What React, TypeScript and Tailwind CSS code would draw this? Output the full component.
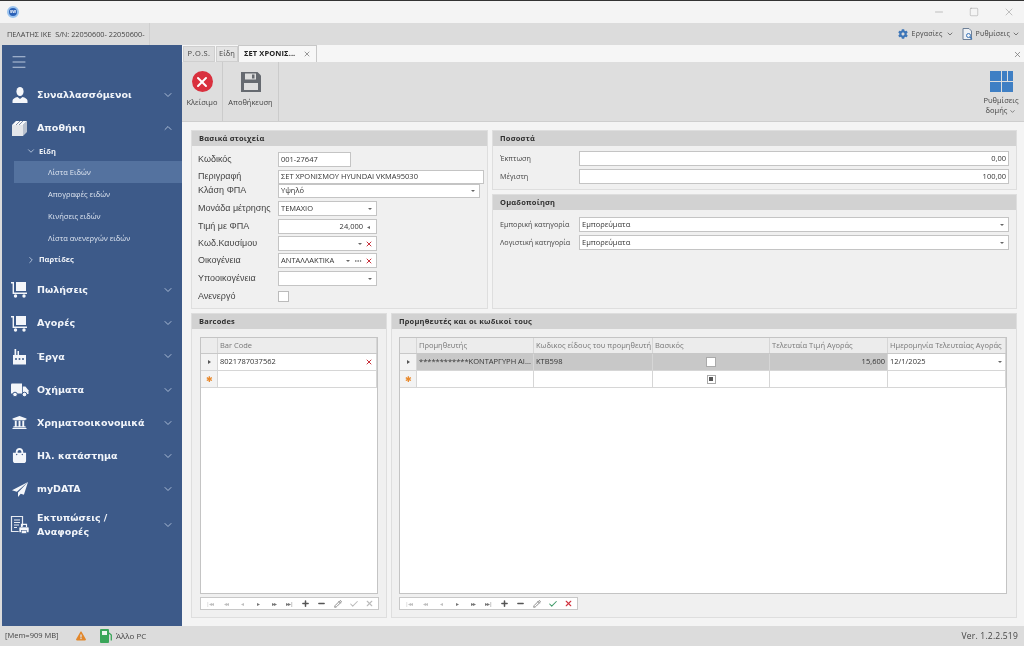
import React from "react";
import { ChevronDown, ChevronRight, ChevronUp, Check, X, Minus, Plus, Pencil, Square, Menu, Ellipsis } from "lucide-react";
import { FaUniversity, FaShoppingBag, FaCog, FaExclamationTriangle } from "react-icons/fa";

const UserIcon = () => (
  <svg width="18" height="18" viewBox="0 0 18 18" fill="#f4f6fa">
    <ellipse cx="9" cy="5.5" rx="3.6" ry="4.6" />
    <path d="M1.5 17v-2.2c0-2 2.4-3.1 5-3.8L9 13l2.5-2c2.6.7 5 1.800 5 3.800V17z" />
  </svg>
);
const BoxIcon = () => (
  <svg width="18" height="18" viewBox="0 0 18 18">
    <path d="M1 6h11v11H1z" fill="#e4e6ea" />
    <path d="M12 6l4-4v11l-4 4z" fill="#b9c1ce" />
    <path d="M1 6l4-4h11l-4 4z" fill="#f6f7f9" />
    <path d="M5 6l4-4M8 6l4-4" stroke="#7f8ea8" strokeWidth="1" />
  </svg>
);
const CartIcon = () => (
  <svg width="17" height="17" viewBox="0 0 17 17" fill="#f4f6fa">
    <path d="M0 1h3v10.500h13v1.500H1.600V2.500H0z" />
    <rect x="5" y="1" width="10" height="9" />
    <circle cx="4.500" cy="15" r="1.700" />
    <circle cx="13" cy="15" r="1.700" />
  </svg>
);
const FactoryIcon = () => (
  <svg width="15" height="17" viewBox="0 0 15 17" fill="#f4f6fa">
    <path d="M1 7h1.500V1h1.700v6h1.300V3h1.500v4L14 7v9.500H1z" />
    <g fill="#3d5a89">
      <circle cx="4" cy="11" r="1" /><circle cx="7.500" cy="11" r="1" /><circle cx="11" cy="11" r="1" />
    </g>
  </svg>
);
const TruckIcon = () => (
  <svg width="18" height="14" viewBox="0 0 18 14" fill="#f4f6fa">
    <path d="M0 1.500Q0 .5 1 .5h10v10H0z" />
    <path d="M11.800 3.500h2.600l3.100 3.800v3.700h-5.700z" />
    <circle cx="4" cy="11.500" r="2.300" stroke="#3d5a89" />
    <circle cx="13.500" cy="11.500" r="2.300" stroke="#3d5a89" />
  </svg>
);
const PlaneIcon = () => (
  <svg width="16" height="15" viewBox="0 0 16 15" fill="#f4f6fa">
    <path d="M16 0L0 8.200l4.800 1.600zM16 0L6 10.500V15l2.700-3.300 3.200 1z" />
  </svg>
);
const PrintDocIcon = () => (
  <svg width="20" height="20" viewBox="0 0 20 20" fill="none">
    <path d="M1.500 1.500h11v15h-11z" stroke="#e6eaf1" strokeWidth="1.200" />
    <path d="M4 5h6M4 7.500h6M4 10h5M4 12.500h3" stroke="#e6eaf1" strokeWidth="1" />
    <rect x="9" y="12" width="10" height="5.500" rx="1" fill="#f4f6fa" stroke="#3d5a89" strokeWidth=".6" />
    <path d="M11.500 12V9.300h5V12" stroke="#f4f6fa" strokeWidth="1.200" />
    <rect x="11.500" y="15.500" width="5" height="3" fill="#f4f6fa" stroke="#3d5a89" strokeWidth=".6" />
  </svg>
);
const SaveIcon = () => (
  <svg width="20" height="20" viewBox="0 0 20 20">
    <path d="M0 0h16.500L20 3.500V20H0z" fill="#666a70" />
    <rect x="4" y="1.500" width="11" height="6" fill="#dedede" />
    <rect x="11" y="2.500" width="2.500" height="4" fill="#666a70" />
    <rect x="3" y="11" width="14" height="7" fill="#dedede" />
  </svg>
);
const PumpIcon = () => (
  <svg width="12" height="14" viewBox="0 0 12 14">
    <rect x="0" y="0" width="9" height="14" rx="1" fill="#3aa65a" />
    <rect x="2" y="2" width="5" height="4" fill="#ecf6ee" />
    <path d="M9 4l2.300 2v5.500" stroke="#3aa65a" strokeWidth="1.300" fill="none" />
  </svg>
);
const DocIcon = () => (
  <svg width="11" height="12" viewBox="0 0 11 12" fill="none">
    <path d="M1 .5h6l2.500 2.500v8.500H1z" stroke="#6d7f96" strokeWidth="1" fill="#eef1f5" />
    <circle cx="6.500" cy="7.500" r="2" stroke="#3d76b8" strokeWidth="1" />
    <path d="M8 9l2 2.300" stroke="#3d76b8" strokeWidth="1.200" />
  </svg>
);

function MainItem({ icon, label, open, big }: { icon: React.ReactNode; label: React.ReactNode; open?: boolean; big?: boolean }) {
  return (
    <div className={`flex items-center pl-[6px] pr-[8px] text-[#f2f5fa] shrink-0 ${big ? "h-[38px]" : "h-[33.200px]"}`}>
      <div className="w-[23px] flex justify-center text-[#f4f6fa]">{icon}</div>
      <div className="ml-[6px] flex-1 text-[9.500px] leading-[13.500px] font-bold font-['DejaVu_Sans',sans-serif]">{label}</div>
      {open ? <ChevronUp size={12} className="text-[#aabbd5]" /> : <ChevronDown size={12} className="text-[#aabbd5]" />}
    </div>
  );
}

function SubItem({ label, active }: { label: string; active?: boolean }) {
  return (
    <div className={`ml-[12px] h-[22px] pl-[34px] flex items-center text-[7.500px] shrink-0 text-[#dfe6f1] ${active ? "bg-[#54729f]" : ""}`}>{label}</div>
  );
}

function Sidebar() {
  return (
    <aside className="w-[180px] ml-[2px] bg-[#3d5a89] flex flex-col shrink-0">
      <div className="h-[33px] flex items-center pl-[8px] text-[#c9d6e8] shrink-0"><Menu size={18} strokeWidth={1.200} /></div>
      <MainItem icon={<UserIcon />} label="Συναλλασσόμενοι" />
      <MainItem icon={<BoxIcon />} label="Αποθήκη" open />
      <div className="h-[17px] pb-[3px] flex items-center pl-[24px] text-[7.500px] font-bold text-[#f0f3f8] shrink-0">
        <ChevronDown size={10} className="mr-[3px] text-[#c2d0e4]" />Είδη
      </div>
      <SubItem label="Λίστα Ειδών" active />
      <SubItem label="Απογραφές ειδών" />
      <SubItem label="Κινήσεις ειδών" />
      <SubItem label="Λίστα ανενεργών ειδών" />
      <div className="h-[24px] pb-[3px] flex items-center pl-[24px] text-[7.500px] font-bold text-[#f0f3f8] shrink-0">
        <ChevronRight size={10} className="mr-[3px] text-[#c2d0e4]" />Παρτίδες
      </div>
      <MainItem icon={<CartIcon />} label="Πωλήσεις" />
      <MainItem icon={<CartIcon />} label="Αγορές" />
      <MainItem icon={<FactoryIcon />} label="Έργα" />
      <MainItem icon={<TruckIcon />} label="Οχήματα" />
      <MainItem icon={<FaUniversity size={15} />} label="Χρηματοοικονομικά" />
      <MainItem icon={<FaShoppingBag size={15} />} label="Ηλ. κατάστημα" />
      <MainItem icon={<PlaneIcon />} label="myDATA" />
      <MainItem big icon={<PrintDocIcon />} label={<>Εκτυπώσεις /<br />Αναφορές</>} />
    </aside>
  );
}

function Panel({ title, className, children }: { title: string; className?: string; children: React.ReactNode }) {
  return (
    <section className={`flex flex-col bg-[#f0f0f0] border border-[#dedede] ${className ?? ""}`}>
      <div className="h-[15px] bg-[#d2d2d2] flex items-center pl-[7px] text-[7.500px] font-bold text-[#2f2f2f] tracking-[0.2px] shrink-0">{title}</div>
      {children}
    </section>
  );
}

function Field({ value, width, right, arrow, del, dots, spin, h }: { value?: string; width: string; right?: boolean; arrow?: boolean; del?: boolean; dots?: boolean; spin?: boolean; h?: string }) {
  return (
    <div className={`${width} ${h ?? "h-[15px]"} bg-white border border-[#c4c4c4] flex items-center px-[2px] text-[7.500px] text-[#333] shrink-0 overflow-hidden`}>
      <span className={`flex-1 whitespace-nowrap ${right ? "text-right" : ""}`}>{value}</span>
      {spin && <span className="w-[6px] ml-[4px] mr-[1px] text-[#666] text-[6px] leading-none">◂</span>}
      {arrow && <span className="ml-[3px] mr-[2px] w-0 h-0 border-x-[2px] border-x-transparent border-t-[2px] border-t-[#666]" />}
      {dots && <Ellipsis size={8} className="mx-[2px] text-[#555]" />}
      {del && <X size={8} strokeWidth={3} className="ml-[1px] mr-[1px] text-[#c8323c]" />}
    </div>
  );
}

function FormRow({ label, mt, children, lw = "w-[80px]", fs = "text-[9px] font-['Liberation_Sans',sans-serif]" }: { label: string; mt: string; children: React.ReactNode; lw?: string; fs?: string }) {
  return (
    <div className={`flex items-center ${mt}`}>
      <div className={`${lw} ${fs} shrink-0 text-[#444] whitespace-nowrap`}>{label}</div>
      {children}
    </div>
  );
}

function NavButtons({ active }: { active?: boolean }) {
  const g = "w-[16px] flex justify-center text-[6px] leading-none tracking-[-1px]";
  return (
    <div className="h-[13px] w-fit bg-white border border-[#c8c8c8] flex items-center px-[0.500px] shrink-0">
      <span className={`${g} text-[#c0c0c0]`}>|◂◂</span>
      <span className={`${g} text-[#c0c0c0]`}>◂◂</span>
      <span className={`${g} text-[#c0c0c0]`}>◂</span>
      <span className={`${g} text-[#777]`}>▸</span>
      <span className={`${g} text-[#777]`}>▸▸</span>
      <span className={`${g} text-[#777]`}>▸▸|</span>
      <span className="w-[16px] flex justify-center text-[#555]"><Plus size={9} strokeWidth={4} /></span>
      <span className="w-[16px] flex justify-center text-[#555]"><Minus size={9} strokeWidth={4} /></span>
      <span className="w-[16px] flex justify-center text-[#777]"><Pencil size={8} strokeWidth={2.500} /></span>
      <span className={`w-[16px] flex justify-center ${active ? "text-[#3f9a68]" : "text-[#bbb]"}`}><Check size={10} strokeWidth={2.500} /></span>
      <span className={`w-[16px] flex justify-center ${active ? "text-[#d0343f]" : "text-[#bbb]"}`}><X size={9} strokeWidth={3} /></span>
    </div>
  );
}

function Cell({ w, children, right, cls }: { w: string; children?: React.ReactNode; right?: boolean; cls?: string }) {
  return (
    <div className={`${w} shrink-0 h-full border-r border-[#d6d6d6] flex items-center px-[2px] text-[7.500px] whitespace-nowrap overflow-hidden ${right ? "justify-end" : ""} ${cls ?? ""}`}>{children}</div>
  );
}

function Star() {
  return <span className="text-[#e98a2e] text-[8px] leading-none">✱</span>;
}

function Tri() {
  return <span className="w-0 h-0 border-y-[2.500px] border-y-transparent border-l-[3px] border-l-[#555]" />;
}

export default function App() {
  const c1 = "w-[17px]", c2 = "w-[117px]", c3 = "w-[119px]", c4 = "w-[117px]", c5 = "w-[118px]";
  const small = "text-[7.200px]";
  return (
    <div className="w-[1024px] h-[646px] overflow-hidden flex flex-col bg-[#dcdcdc] font-['Open_Sans','Noto_Sans',sans-serif] blur-[0.3px]">
      <div className="h-[1px] bg-[#333] shrink-0" />
      <header className="h-[22px] bg-[#f4f4f4] flex items-center shrink-0">
        <div className="ml-[7px] w-[12px] h-[12px] rounded-full bg-[#2b62b8] border-2 border-[#9cc4ee] flex items-center justify-center text-[4px] font-bold text-white">SW</div>
        <div className="ml-auto flex items-center text-[#888]">
          <Minus size={12} strokeWidth={1} className="mr-[24px]" />
          <Square size={10} strokeWidth={1} className="mr-[24px]" />
          <X size={12} strokeWidth={1} className="mr-[9px]" />
        </div>
      </header>
      <div className="h-[22px] bg-[#dcdcdc] flex items-center shrink-0 text-[#444]">
        <div className="pl-[7px] w-[150px] h-full flex items-center border-r border-[#cfcfcf] whitespace-nowrap text-[7.300px]">ΠΕΛΑΤΗΣ ΙΚΕ &nbsp;S/N: 22050600- 22050600-</div>
        <div className="ml-auto flex items-center text-[7px] tracking-[0.2px]">
          <FaCog size={10} className="text-[#3d76b8] mr-[4px]" />
          <span>Εργασίες</span>
          <ChevronDown size={8} className="ml-[3px] mr-[8px]" />
          <DocIcon />
          <span className="ml-[3px]">Ρυθμίσεις</span>
          <ChevronDown size={8} className="ml-[2px] mr-[4px]" />
        </div>
      </div>
      <div className="flex-1 flex min-h-0">
        <Sidebar />
        <main className="flex-1 flex flex-col min-w-0">
          <div className="h-[17px] bg-[#f6f6f6] flex items-end shrink-0">
            <div className="h-[16px] w-[32px] ml-[1px] bg-[#dedede] border border-[#cfcfcf] flex items-center justify-center text-[7.500px] text-[#444] tracking-[0.4px]">P.O.S.</div>
            <div className="h-[16px] w-[22px] ml-[1px] bg-[#e4e4e4] border border-[#cfcfcf] flex items-center justify-center text-[7.500px] text-[#444]">Είδη</div>
            <div className="h-[17px] w-[79px] bg-[#f7f7f7] border border-[#c8c8c8] border-b-0 flex items-center pl-[5px] text-[7.500px] font-bold text-[#222] tracking-[0.1px] whitespace-nowrap">
              ΣΕΤ ΧΡΟΝΙΣ...
              <X size={8} className="ml-auto mr-[5px] text-[#666]" />
            </div>
            <X size={9} className="ml-auto mr-[2px] mb-[3px] text-[#777]" />
          </div>
          <div className="h-[60px] bg-[#dedede] flex shrink-0 border-b border-[#cecece]">
            <div className="w-[41px] flex flex-col items-center border-r border-[#cbcbcb]">
              <div className="mt-[9px] w-[21px] h-[21px] rounded-full bg-[#d9303e] flex items-center justify-center text-white"><X size={16} strokeWidth={3} /></div>
              <div className="mt-[5px] text-[7.500px] text-[#444]">Κλείσιμο</div>
            </div>
            <div className="w-[56px] flex flex-col items-center border-r border-[#cbcbcb]">
              <div className="mt-[10px]"><SaveIcon /></div>
              <div className="mt-[5px] text-[7.500px] text-[#444]">Αποθήκευση</div>
            </div>
            <div className="ml-auto w-[44px] flex flex-col items-center mr-[1px]">
              <div className="mt-[9px] w-[23px] h-[21px] grid grid-cols-2 gap-[1px]">
                <div className="bg-[#3f7fc4]" />
                <div className="grid grid-cols-2 gap-[1px]"><div className="bg-[#3f7fc4]" /><div className="bg-[#3f7fc4]" /></div>
                <div className="bg-[#3f7fc4]" />
                <div className="bg-[#3f7fc4]" />
              </div>
              <div className="mt-[3px] text-[7.500px] leading-[10px] text-[#444] text-center">Ρυθμίσεις<br />δομής <ChevronDown size={7} className="inline" /></div>
            </div>
          </div>
          <div className="flex-1 bg-[#f4f4f4] pl-[9px] pr-[7px] pt-[8px] pb-[8px] flex flex-col gap-[4px] min-h-0">
            <div className="h-[179px] flex gap-[4px] shrink-0">
              <Panel title="Βασικά στοιχεία" className="w-[297px] shrink-0">
                <div className="pl-[6px] flex flex-col">
                  <FormRow label="Κωδικός" mt="mt-[6px]"><Field value="001-27647" width="w-[73px]" /></FormRow>
                  <FormRow label="Περιγραφή" mt="mt-[3px]"><Field value="ΣΕΤ ΧΡΟΝΙΣΜΟΥ HYUNDAI VKMA95030" width="w-[206px]" h="h-[14px]" /></FormRow>
                  <FormRow label="Κλάση ΦΠΑ" mt="mt-0"><Field value="Υψηλό" width="w-[202px]" arrow h="h-[14px]" /></FormRow>
                  <FormRow label="Μονάδα μέτρησης" mt="mt-[3px]"><Field value="ΤΕΜΑΧΙΟ" width="w-[99px]" arrow /></FormRow>
                  <FormRow label="Τιμή με ΦΠΑ" mt="mt-[3px]"><Field value="24,000" width="w-[99px]" right spin /></FormRow>
                  <FormRow label="Κωδ.Καυσίμου" mt="mt-[2px]"><Field width="w-[99px]" arrow del /></FormRow>
                  <FormRow label="Οικογένεια" mt="mt-[2px]"><Field value="ΑΝΤΑΛΛΑΚΤΙΚΑ" width="w-[99px]" arrow dots del /></FormRow>
                  <FormRow label="Υποοικογένεια" mt="mt-[3px]"><Field width="w-[99px]" arrow /></FormRow>
                  <FormRow label="Ανενεργό" mt="mt-[4px]"><div className="w-[11px] h-[11px] bg-white border border-[#bbb]" /></FormRow>
                </div>
              </Panel>
              <div className="flex-1 flex flex-col gap-[4px] min-w-0">
                <Panel title="Ποσοστά" className="h-[60px] shrink-0">
                  <div className="px-[7px]">
                    <FormRow label="Έκπτωση" mt="mt-[5px]" lw="w-[79px]" fs={small}><Field value="0,00" width="flex-1" right /></FormRow>
                    <FormRow label="Μέγιστη" mt="mt-[3px]" lw="w-[79px]" fs={small}><Field value="100,00" width="flex-1" right /></FormRow>
                  </div>
                </Panel>
                <Panel title="Ομαδοποίηση" className="flex-1">
                  <div className="px-[7px]">
                    <FormRow label="Εμπορική κατηγορία" mt="mt-[7px]" lw="w-[79px]" fs={small}><Field value="Εμπορεύματα" width="flex-1" arrow /></FormRow>
                    <FormRow label="Λογιστική κατηγορία" mt="mt-[3px]" lw="w-[79px]" fs={small}><Field value="Εμπορεύματα" width="flex-1" arrow /></FormRow>
                  </div>
                </Panel>
              </div>
            </div>
            <div className="flex-1 flex gap-[4px] min-h-0">
              <Panel title="Barcodes" className="w-[196px] shrink-0">
                <div className="flex-1 flex flex-col px-[8px] pt-[8px] pb-[7px] min-h-0">
                  <div className="flex-1 bg-white border border-[#c4c4c4] flex flex-col min-h-0">
                    <div className="h-[16px] bg-[#ececec] border-b border-[#c8c8c8] flex text-[#777]">
                      <Cell w={c1} />
                      <Cell w="flex-1">Bar Code</Cell>
                    </div>
                    <div className="h-[17px] border-b border-[#d6d6d6] flex text-[#333]">
                      <Cell w={c1} cls="justify-center bg-[#f3f3f3]"><Tri /></Cell>
                      <Cell w="flex-1">8021787037562<X size={8} strokeWidth={3} className="ml-auto mr-[1px] text-[#c8323c]" /></Cell>
                    </div>
                    <div className="h-[17px] border-b border-[#d6d6d6] flex">
                      <Cell w={c1} cls="justify-center bg-[#f3f3f3]"><Star /></Cell>
                      <Cell w="flex-1" />
                    </div>
                  </div>
                  <div className="mt-[3px]"><NavButtons /></div>
                </div>
              </Panel>
              <Panel title="Προμηθευτές και οι κωδικοί τους" className="flex-1 min-w-0">
                <div className="flex-1 flex flex-col pl-[7px] pr-[9px] pt-[8px] pb-[7px] min-h-0">
                  <div className="flex-1 bg-white border border-[#c4c4c4] flex flex-col min-h-0">
                    <div className="h-[16px] bg-[#ececec] border-b border-[#c8c8c8] flex text-[#777]">
                      <Cell w={c1} />
                      <Cell w={c2}>Προμηθευτής</Cell>
                      <Cell w={c3}>Κωδικος είδους του προμηθευτή</Cell>
                      <Cell w={c4}>Βασικός</Cell>
                      <Cell w={c5}>Τελευταία Τιμή Αγοράς</Cell>
                      <Cell w="flex-1">Ημερομηνία Τελευταίας Αγοράς</Cell>
                    </div>
                    <div className="h-[17px] border-b border-[#d6d6d6] flex text-[#333]">
                      <Cell w={c1} cls="justify-center bg-[#f3f3f3]"><Tri /></Cell>
                      <Cell w={c2} cls="bg-[#c8c8c8]">************ΚΟΝΤΑΡΓΥΡΗ ΑΙ...</Cell>
                      <Cell w={c3} cls="bg-[#c8c8c8]">KTB598</Cell>
                      <Cell w={c4} cls="bg-[#c8c8c8] justify-center"><div className="w-[10px] h-[10px] bg-white border border-[#aaa]" /></Cell>
                      <Cell w={c5} cls="bg-[#c8c8c8]" right>15,600</Cell>
                      <Cell w="flex-1">12/1/2025<span className="ml-auto mr-[1px] w-0 h-0 border-x-[2px] border-x-transparent border-t-[2px] border-t-[#666]" /></Cell>
                    </div>
                    <div className="h-[17px] border-b border-[#d6d6d6] flex">
                      <Cell w={c1} cls="justify-center bg-[#f3f3f3]"><Star /></Cell>
                      <Cell w={c2} />
                      <Cell w={c3} />
                      <Cell w={c4} cls="justify-center"><div className="w-[9px] h-[9px] bg-white border border-[#aaa] flex items-center justify-center"><div className="w-[4px] h-[4px] bg-[#555]" /></div></Cell>
                      <Cell w={c5} />
                      <Cell w="flex-1" />
                    </div>
                  </div>
                  <div className="mt-[3px]"><NavButtons active /></div>
                </div>
              </Panel>
            </div>
          </div>
        </main>
      </div>
      <footer className="h-[20px] bg-[#dcdcdc] flex items-center text-[7.500px] text-[#444] shrink-0">
        <span className="ml-[5px] w-[71px]">[Mem=909 MB]</span>
        <FaExclamationTriangle size={10} className="text-[#e2872b]" />
        <span className="ml-[14px]"><PumpIcon /></span>
        <span className="ml-[4px] text-[8px]">Άλλο PC</span>
        <span className="ml-auto mr-[6px] text-[8.500px] tracking-[0.2px]">Ver. 1.2.2.519</span>
      </footer>
    </div>
  );
}
